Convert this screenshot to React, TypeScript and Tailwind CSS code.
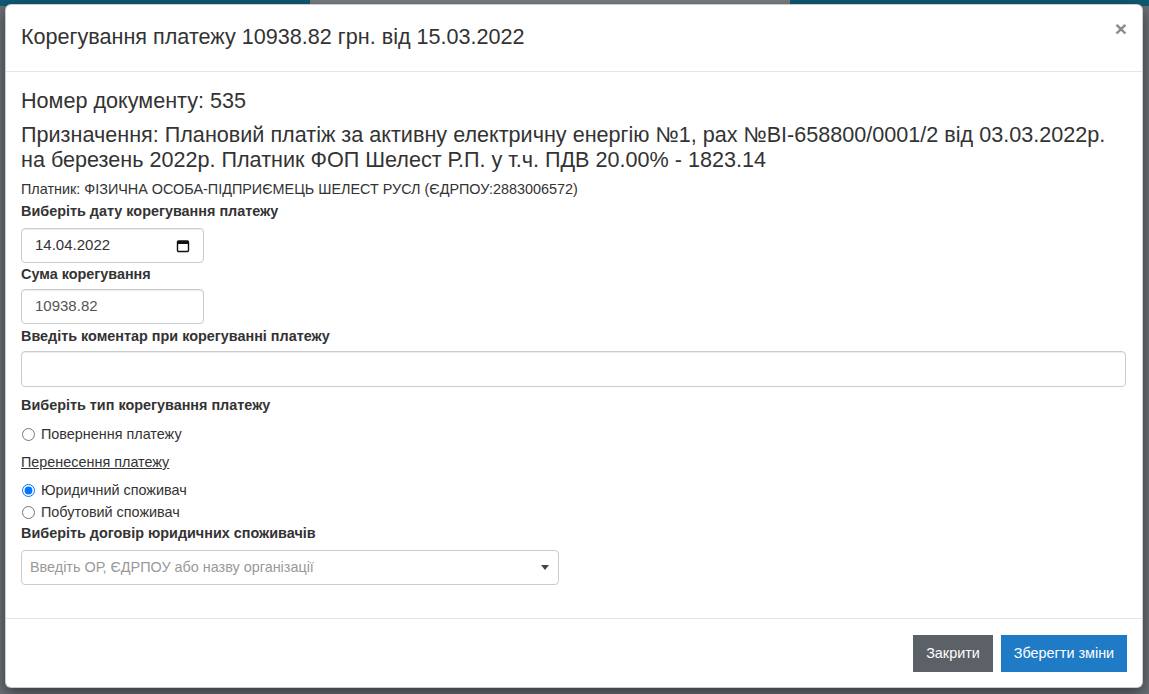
import React from 'react';

const font = { fontFamily: '"Liberation Sans", Arial, sans-serif' };

function CalendarIcon() {
  return (
    <svg viewBox="0 0 14 14" className="h-[14px] w-[14px]" aria-hidden="true">
      <rect x="1.5" y="2" width="11" height="10.5" rx="1" fill="none" stroke="#111" strokeWidth="1.4" />
      <rect x="1.5" y="2" width="11" height="3" fill="#111" />
    </svg>
  );
}

function Label({ children }: { children: React.ReactNode }) {
  return <div className="text-[14.4px] font-bold leading-[18px] text-[#333]">{children}</div>;
}

function Radio({ label, checked = false }: { label: string; checked?: boolean }) {
  return (
    <label className="flex items-center gap-[6px] text-[14.4px] leading-[20px] text-[#333]">
      <input type="radio" name="kind" defaultChecked={checked} className="m-0 ml-[1px] h-[13px] w-[13px]" />
      {label}
    </label>
  );
}

export default function App() {
  return (
    <div className="relative h-[694px] w-[1149px] overflow-hidden bg-[#6b7178]" style={font}>
      {/* dimmed page behind the modal */}
      <div className="absolute inset-x-0 top-0 flex h-[6px]">
        <div className="w-[310px] bg-[#0f5a77]" />
        <div className="w-[480px] bg-[#7a7f84]" />
        <div className="flex-1 bg-[#0f5a77]" />
      </div>

      {/* Modal */}
      <div className="absolute left-[5px] top-[4px] flex h-[684px] w-[1138px] flex-col rounded-[6px] border border-black/20 bg-white shadow-[0_5px_15px_rgba(0,0,0,0.5)]">
        {/* Header */}
        <div className="flex h-[67px] items-start justify-between border-b border-[#e5e5e5] pl-[15px] pr-[15px]">
          <h4 className="pt-[19px] text-[21.6px] leading-[26px] text-[#333]">
            Корегування платежу 10938.82 грн. від 15.03.2022
          </h4>
          <button className="pt-[13px] text-[21px] font-bold leading-none text-[#8a8a8a]">×</button>
        </div>

        {/* Body */}
        <div className="flex-1 px-[15px] pt-[16px] text-[#333]">
          <div className="text-[21.6px] leading-[26px]">Номер документу: 535</div>
          <div className="mt-[8px] text-[21.6px] leading-[25px]">
            Призначення: Плановий платіж за активну електричну енергію №1, рах №ВІ-658800/0001/2 від 03.03.2022р.
            <br />
            на березень 2022р. Платник ФОП Шелест Р.П. у т.ч. ПДВ 20.00% - 1823.14
          </div>
          <div className="mt-[8px] text-[14.4px] leading-[18px]">
            Платник: ФІЗИЧНА ОСОБА-ПІДПРИЄМЕЦЬ ШЕЛЕСТ РУСЛ (ЄДРПОУ:2883006572)
          </div>

          <div className="mt-[4px]">
            <Label>Виберіть дату корегування платежу</Label>
            <div className="mt-[8px] flex h-[35px] w-[183px] items-center justify-between rounded-[4px] border border-[#ccc] pl-[13px] pr-[13px] text-[15px] text-[#333] shadow-[inset_0_1px_1px_rgba(0,0,0,0.075)]">
              <span>14.04.2022</span>
              <CalendarIcon />
            </div>
          </div>

          <div className="mt-[2px]">
            <Label>Сума корегування</Label>
            <div className="mt-[6px] flex h-[35px] w-[183px] items-center rounded-[4px] border border-[#ccc] px-[13px] text-[15px] text-[#555] shadow-[inset_0_1px_1px_rgba(0,0,0,0.075)]">
              10938.82
            </div>
          </div>

          <div className="mt-[3px]">
            <Label>Введіть коментар при корегуванні платежу</Label>
            <div className="mt-[6px] h-[36px] w-[1105px] rounded-[4px] border border-[#ccc] shadow-[inset_0_1px_1px_rgba(0,0,0,0.075)]" />
          </div>

          <div className="mt-[9px]">
            <Label>Виберіть тип корегування платежу</Label>
            <div className="mt-[10px]">
              <Radio label="Повернення платежу" />
            </div>
            <div className="mt-[8px] text-[14.4px] leading-[20px] underline">Перенесення платежу</div>
            <div className="mt-[8px] flex flex-col gap-[2px]">
              <Radio label="Юридичний споживач" checked />
              <Radio label="Побутовий споживач" />
            </div>
          </div>

          <div className="mt-[2px]">
            <Label>Виберіть договір юридичних споживачів</Label>
            <div className="mt-[8px] flex h-[35px] w-[538px] items-center justify-between rounded-[4px] border border-[#ccc] pl-[8px] pr-[9px] text-[14.4px] text-[#999]">
              <span>Введіть ОР, ЄДРПОУ або назву організації</span>
              <svg viewBox="0 0 8 5" className="h-[5px] w-[8px]" aria-hidden="true">
                <path d="M0 0h8L4 5z" fill="#444" />
              </svg>
            </div>
          </div>
        </div>

        {/* Footer */}
        <div className="flex h-[69px] items-start justify-end gap-[8px] border-t border-[#e5e5e5] pr-[15px] pt-[16px]">
          <button className="h-[37px] w-[80px] bg-[#5b6166] text-[14.4px] text-white">Закрити</button>
          <button className="h-[37px] w-[126px] bg-[#1f7bc6] text-[14.4px] text-white">Зберегти зміни</button>
        </div>
      </div>
    </div>
  );
}
